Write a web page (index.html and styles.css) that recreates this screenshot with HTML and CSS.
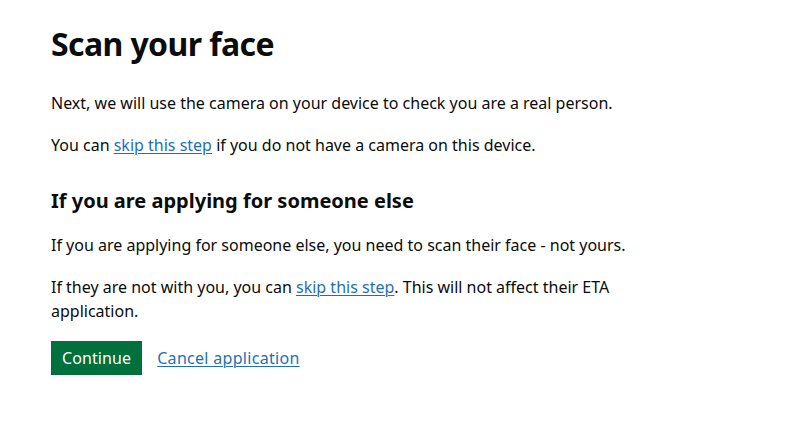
FILE: index.html
```html
<!DOCTYPE html>
<html lang="en">

<head>
	<meta charset="UTF-8">
	<title>Scan your face</title>
	<link rel="stylesheet" href="styles.css">
</head>

<body>
	<main class="main">
		<h1 class="heading-l">Scan your face</h1>
		<p class="body">Next, we will use the camera on your device to check you are a real person.</p>
		<p class="body">You can <a class="link" href="#">skip this step</a> if you do not have a camera on this device.</p>

		<h2 class="heading-m">If you are applying for someone else</h2>
		<p class="body">If you are applying for someone else, you need to scan their face - not yours.</p>
		<p class="body">If they are not with you, you can <a class="link" href="#">skip this step</a>. This will not affect their ETA application.</p>

		<div class="button-group">
			<button class="button" type="button">Continue</button>
			<a class="link" href="#">Cancel application</a>
		</div>
	</main>
</body>

</html>
```

FILE: styles.css
```css
* {
	box-sizing: border-box;
}

body {
	margin: 0;
	background: #fff;
	color: #0b0c0c;
	font-family: "Noto Sans", "Open Sans", Arial, sans-serif;
}

.main {
	max-width: 651px;
	padding: 24px 0 0 51px;
}

.heading-l {
	margin: 0 0 27px;
	font-size: 32px;
	line-height: 40px;
	font-weight: 700;
	letter-spacing: -0.6px;
}

.heading-m {
	margin: 30px 0 18px;
	font-size: 20px;
	line-height: 28px;
	font-weight: 700;
}

.body {
	margin: 0 0 18px;
	font-size: 16px;
	line-height: 24px;
}

.link {
	color: #1d70b8;
	text-decoration: underline;
	text-decoration-thickness: 1px;
	text-underline-offset: 2px;
}

.button-group {
	display: flex;
	align-items: center;
	gap: 15px;
	margin-top: 18px;
}

.button {
	padding: 8px 11px 7px;
	border: 0;
	border-radius: 0;
	background: #00703c;
	box-shadow: 0 2px 0 #002d18;
	color: #fff;
	font: inherit;
	font-size: 16px;
	line-height: 19px;
	letter-spacing: 0.1px;
}

.button-group .link {
	font-size: 16px;
	letter-spacing: 0.3px;
}
```
